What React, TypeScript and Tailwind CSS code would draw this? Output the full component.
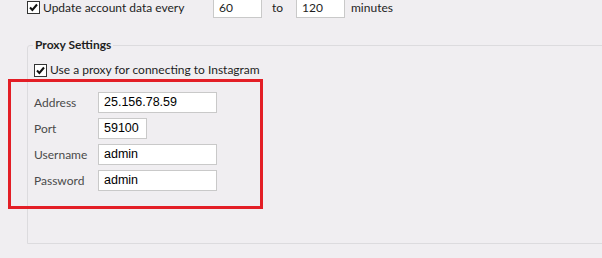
import React from 'react';

function Check() {
  return (
    <span className="w-[13px] h-[13px] border border-[#333] bg-white flex items-center justify-center shrink-0">
      <svg width="11" height="11" viewBox="0 0 11 11">
        <path d="M2 5.5 L4.4 8 L9 2.5" fill="none" stroke="#111" strokeWidth="2" />
      </svg>
    </span>
  );
}

function Field({ value, w }: { value: string; w: string }) {
  return (
    <div className={`${w} h-[21px] bg-white border border-[#c9c9c9] flex items-center pl-[5px] text-[12.5px] text-black font-['Liberation_Sans',Arial,sans-serif]`}>
      {value}
    </div>
  );
}

function App() {
  const rows = [
    { label: 'Address', value: '25.156.78.59', w: 'w-[119px]' },
    { label: 'Port', value: '59100', w: 'w-[49px]' },
    { label: 'Username', value: 'admin', w: 'w-[119px]' },
    { label: 'Password', value: 'admin', w: 'w-[119px]' },
  ];

  return (
    <div className="w-[602px] h-[258px] bg-[#f0eef1] overflow-hidden relative text-[12px] text-[#1e1e1e] font-['Lato','Noto_Sans',sans-serif]">
      {/* account refresh row */}
      <div className="flex items-center h-[21px] -mt-[3px] pl-[27px]">
        <div className="w-[186px] flex items-center gap-[3px]">
          <Check />
          <span>Update account data every</span>
        </div>
        <div className="w-[49px] h-[21px] bg-white border border-[#c9c9c9] flex items-center pl-[5px]">60</div>
        <span className="w-[34px] pl-[10px]">to</span>
        <div className="w-[49px] h-[21px] bg-white border border-[#c9c9c9] flex items-center pl-[5px]">120</div>
        <span className="ml-[6px]">minutes</span>
      </div>

      {/* proxy group */}
      <fieldset className="mt-[19px] ml-[27px] w-[600px] h-[207px] border border-[#dcdbde] rounded-tl-[3px] pl-[6px]">
        <legend className="-ml-[1px] px-[2px] font-bold leading-[16px]">Proxy Settings</legend>
        <div className="flex items-center gap-[3px] h-[16px] mt-[9px]">
          <Check />
          <span>Use a proxy for connecting to Instagram</span>
        </div>
        <div className="mt-[14px] flex flex-col gap-[5px]">
          {rows.map((r) => (
            <div key={r.label} className="flex items-center">
              <span className="w-[64px] text-[#4a4a4a]">{r.label}</span>
              <Field value={r.value} w={r.w} />
            </div>
          ))}
        </div>
      </fieldset>

      {/* annotation */}
      <div className="absolute left-[8px] top-[79px] w-[255px] h-[130px] border-[3px] border-[#e31e26]" />
    </div>
  );
}

export default App;
